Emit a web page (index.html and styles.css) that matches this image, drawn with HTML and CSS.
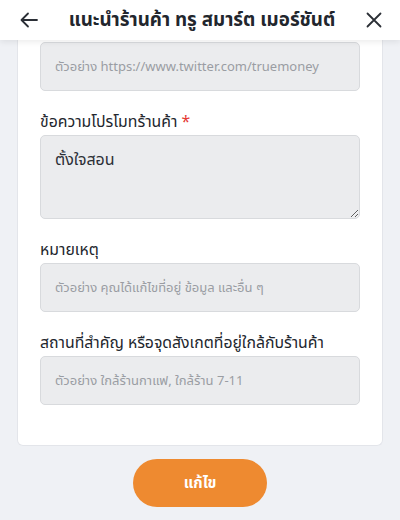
FILE: index.html
```html
<!DOCTYPE html>
<html lang="th">
<head>
  <meta charset="UTF-8" />
  <meta name="viewport" content="width=device-width, initial-scale=1.0"/>
  <title>แนะนำร้านค้า ทรู สมาร์ต เมอร์ชันต์</title>
  <link rel="stylesheet" href="styles.css">
</head>
<body>

  <div class="topbar">
    <button class="icon-btn" aria-label="back">
      <svg width="18" height="16" viewBox="0 0 18 16"><path d="M17 8H2M8 1.5L1.5 8 8 14.5" fill="none" stroke="#2b2f36" stroke-width="1.8" stroke-linecap="round" stroke-linejoin="round"/></svg>
    </button>
    <h1>แนะนำร้านค้า ทรู สมาร์ต เมอร์ชันต์</h1>
    <button class="icon-btn" aria-label="close">
      <svg width="16" height="16" viewBox="0 0 16 16"><path d="M1.5 1.5L14.5 14.5M14.5 1.5L1.5 14.5" fill="none" stroke="#2b2f36" stroke-width="1.8" stroke-linecap="round"/></svg>
    </button>
  </div>

  <div class="content">
    <div class="card">
      <input type="text" placeholder="ตัวอย่าง https://www.twitter.com/truemoney" />

      <label class="field-label">ข้อความโปรโมทร้านค้า <span class="req">*</span></label>
      <textarea rows="3">ตั้งใจสอน</textarea>

      <label class="field-label">หมายเหตุ</label>
      <input type="text" placeholder="ตัวอย่าง คุณได้แก้ไขที่อยู่ ข้อมูล และอื่น ๆ" />

      <label class="field-label">สถานที่สำคัญ หรือจุดสังเกตที่อยู่ใกล้กับร้านค้า</label>
      <input type="text" placeholder="ตัวอย่าง ใกล้ร้านกาแฟ, ใกล้ร้าน 7-11" />
    </div>

    <button class="primary">แก้ไข</button>
  </div>

</body>
</html>
```

FILE: styles.css
```css
body {
  font-family: "Noto Sans Thai", "Noto Sans", "DejaVu Sans", sans-serif;
  background: #eff1f5;
  margin: 0;
  width: 400px;
  height: 520px;
  overflow: hidden;
  color: #2b2f36;
}

.topbar {
  position: relative;
  z-index: 2;
  height: 40px;
  background: #fff;
  display: flex;
  align-items: center;
  justify-content: space-between;
  padding: 0 14px 0 16px;
  box-shadow: 0 2px 6px rgba(0,0,0,0.08);
}

.topbar h1 {
  margin: 0;
  font-size: 18.8px;
  font-weight: 700;
  color: #22262d;
  white-space: nowrap;
}

.icon-btn {
  background: none;
  border: none;
  padding: 4px;
  display: flex;
  align-items: center;
  cursor: pointer;
}

.content {
  padding: 0 17px;
  display: flex;
  flex-direction: column;
  align-items: center;
}

.card {
  width: 100%;
  box-sizing: border-box;
  background: #fff;
  border: 1px solid #e3e5ea;
  border-top: none;
  border-radius: 0 0 6px 6px;
  padding: 2px 22px 40px;
  display: flex;
  flex-direction: column;
}

.field-label {
  font-size: 15.8px;
  color: #22262d;
  line-height: 20px;
  margin: 21px 0 3px;
}

.req { color: #e53935; }

input, textarea {
  width: 100%;
  box-sizing: border-box;
  font-family: inherit;
  background: #ebecee;
  border: 1px solid #d8dadd;
  border-radius: 5px;
  color: #2b2f36;
  outline: none;
}

input {
  height: 49px;
  padding: 0 14px;
  font-size: 13px;
}

input::placeholder { color: #9a9da3; }

textarea {
  height: 84px;
  padding: 12px 14px 0;
  font-size: 16px;
  line-height: 24px;
  resize: vertical;
}

.primary {
  margin-top: 13px;
  width: 134px;
  height: 48px;
  border: none;
  border-radius: 24px;
  background: #ee8a30;
  color: #fff;
  font-family: inherit;
  font-size: 15px;
  font-weight: 700;
  cursor: pointer;
}
```
